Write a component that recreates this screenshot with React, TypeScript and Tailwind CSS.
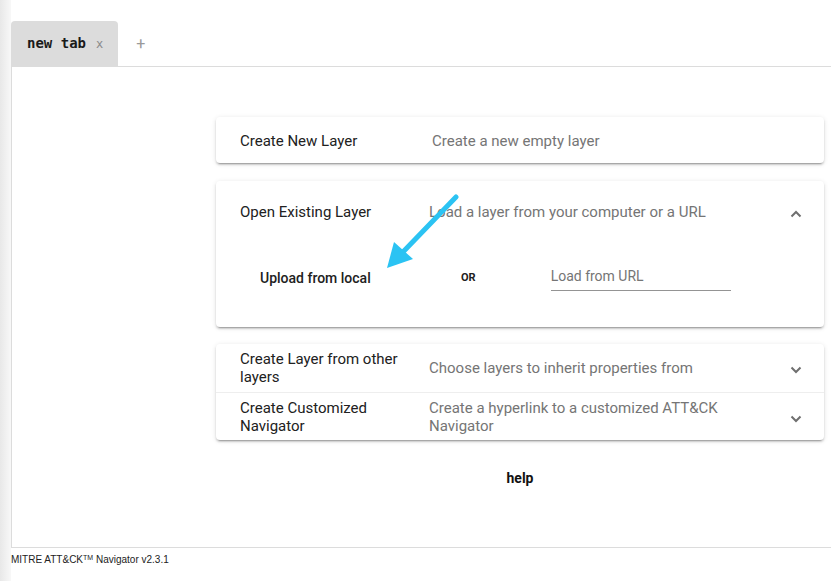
import React from "react";

const CARD_SHADOW =
  "shadow-[0_3px_1px_-2px_rgba(0,0,0,0.2),0_2px_2px_0_rgba(0,0,0,0.14),0_1px_5px_0_rgba(0,0,0,0.12)]";

function Chevron({ up = false }: { up?: boolean }) {
  return (
    <svg width="12" height="8" viewBox="0 0 12 8" className="shrink-0">
      <polyline
        points={up ? "1.5,6.5 6,2 10.5,6.5" : "1.5,1.5 6,6 10.5,1.5"}
        fill="none"
        stroke="#6f6f6f"
        strokeWidth="2"
      />
    </svg>
  );
}

function Row({
  title,
  desc,
  up,
  className = "",
}: {
  title: string;
  desc: string;
  up?: boolean;
  className?: string;
}) {
  return (
    <div className={`flex items-center pl-6 pr-[22px] ${className}`}>
      <div className="w-[173px] mr-4 text-[15px] leading-[18px] text-[#212121]">{title}</div>
      <div className="w-[330px] text-[15px] leading-[18px] text-[#757575]">{desc}</div>
      <div className="ml-auto pt-[4px]">
        <Chevron up={up} />
      </div>
    </div>
  );
}

export default function App() {
  return (
    <div className="relative flex min-h-screen bg-white font-['Roboto',sans-serif]">
      {/* window edge shade */}
      <div className="w-[11px] shrink-0 bg-gradient-to-r from-[#e8e8e8] to-[#f8f8f8]" />

      <div className="flex-1 flex flex-col">
        {/* Tabs */}
        <div className="h-[66px] flex items-end">
          <div className="h-[45px] flex items-center pl-4 pr-[15px] bg-[#dcdcdc] rounded-t-[4px]">
            <span className="font-['DejaVu_Sans_Mono',monospace] font-semibold text-[14px] text-[#1a1a1a]">
              new tab
            </span>
            <span className="ml-[10px] font-['DejaVu_Sans_Mono',monospace] text-[12px] text-[#8a8a8a]">
              x
            </span>
          </div>
          <div className="h-[45px] flex items-center pl-[18px] text-[16px] text-[#9a9a9a]">+</div>
        </div>

        {/* Frame */}
        <div className="h-[482px] border-l border-t border-b border-[#dcdcdc] pt-[50px] pl-[204px]">
          <div className="w-[608px] flex flex-col">
            <div className={`h-[46px] flex items-center pl-6 pt-[3px] bg-white rounded-[4px] ${CARD_SHADOW}`}>
              <div className="w-[176px] mr-4 text-[15px] text-[#212121]">Create New Layer</div>
              <div className="text-[15px] text-[#757575]">Create a new empty layer</div>
            </div>

            <div className={`mt-[18px] h-[146px] bg-white rounded-[4px] ${CARD_SHADOW}`}>
              <Row
                className="h-[64px] pb-[3px]"
                title="Open Existing Layer"
                desc="Load a layer from your computer or a URL"
                up
              />
              <div className="flex items-center h-[36px] mt-[15px] pl-[44px]">
                <div className="w-[112px] text-[14px] font-medium text-[#212121] whitespace-nowrap">
                  Upload from local
                </div>
                <div className="ml-[89px] text-[11px] font-bold text-[#212121]">OR</div>
                <div className="ml-[75px] w-[180px] flex flex-col">
                  <div className="text-[14px] leading-[20px] text-[#757575] pb-[4px] border-b border-[#949494]">
                    Load from URL
                  </div>
                </div>
              </div>
            </div>

            <div className={`mt-[17px] bg-white rounded-[4px] ${CARD_SHADOW}`}>
              <Row
                className="h-[48px]"
                title="Create Layer from other layers"
                desc="Choose layers to inherit properties from"
              />
              <Row
                className="h-[48px] border-t border-[#eeeeee]"
                title="Create Customized Navigator"
                desc="Create a hyperlink to a customized ATT&CK Navigator"
              />
            </div>

            <div className="mt-[28px] text-center text-[14px] leading-[20px] font-bold text-[#111]">help</div>
          </div>
        </div>

        {/* Footer */}
        <div className="mt-[5px] font-['Liberation_Sans',Arial,sans-serif] text-[10px] leading-[14px] text-[#222]">
          MITRE ATT&amp;CK<sup className="text-[7px] top-[-0.4em]">TM</sup> Navigator v2.3.1
        </div>
      </div>

      {/* annotation arrow */}
      <svg className="absolute left-0 top-0 pointer-events-none" width="831" height="581">
        <line x1="456" y1="197" x2="402" y2="253" stroke="#2bc3f3" strokeWidth="5" strokeLinecap="round" />
        <polygon points="387,268 394,242 413,259" fill="#2bc3f3" />
      </svg>
    </div>
  );
}
